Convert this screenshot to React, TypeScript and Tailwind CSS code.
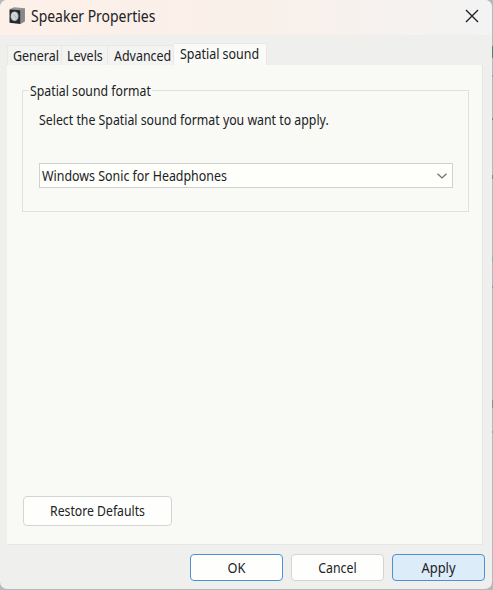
import { useState } from 'react';

const TABS = [
  { label: 'General', size: 'w-[55px] pl-[4.5px]' },
  { label: 'Levels', size: 'w-[46px] pl-[5px]' },
  { label: 'Advanced', size: 'w-[66px] pl-[5.5px]' },
  { label: 'Spatial sound', size: 'w-[93px] pl-[6px]' },
];

function SpeakerIcon() {
  return (
    <svg width="17" height="18" viewBox="0 0 17 18" className="shrink-0">
      <path d="M.5 2.2 5 .3 15.8 1.3v13L11.2 17z" fill="#929597" />
      <path d="M11.2 3.2 15.8 1.3v13.2L11.2 17z" fill="#85898b" />
      <path d="M.5 2.4 11.2 3.2V17L.5 15.7z" fill="#26292b" />
      <ellipse cx="5.6" cy="9.3" rx="4" ry="4.9" fill="#a5abae" />
      <ellipse cx="5.4" cy="9" rx="3.1" ry="3.9" fill="#d3d7d9" />
      <path d="m4.6 7.6 2.6 3.4" stroke="#a9aeb1" strokeWidth="1" />
    </svg>
  );
}

function TitleBar() {
  return (
    <header className="flex h-[35px] shrink-0 items-start bg-linear-to-r from-[#fdf0e8] via-[#f9f0ea] via-55% to-[#f3f3f3] pl-[9px]">
      <div className="pt-[7px]">
        <SpeakerIcon />
      </div>
      <h1 className="ml-[5px] flex-1 origin-left scale-x-[0.9] pt-[6px] text-[15.5px] leading-5 whitespace-nowrap">
        Speaker Properties
      </h1>
      <button aria-label="Close" className="mt-[9px] mr-[13px]">
        <svg width="14" height="14" viewBox="0 0 14 14" fill="none" stroke="#202124" strokeWidth="1.4">
          <path d="m1 1 12 12M13 1 1 13" />
        </svg>
      </button>
    </header>
  );
}

export default function App() {
  const [active, setActive] = useState('Spatial sound');

  return (
    <div className="flex h-[590px] w-[493px] overflow-hidden bg-[#b5b9ba] font-['Noto_Sans','Open_Sans',sans-serif] text-[#202124]">
      <main className="flex h-[589px] w-[492px] shrink-0 flex-col overflow-hidden rounded-[7px] bg-[#efefee]">
        <TitleBar />

        <nav className="flex h-[30px] shrink-0 items-end pl-[7px]">
          {TABS.map((tab) => (
            <button
              key={tab.label}
              onClick={() => setActive(tab.label)}
              className={`flex items-start border-t border-r text-left text-[15px] whitespace-nowrap first:border-l ${tab.size} ${
                active === tab.label
                  ? 'h-[22px] border-[#e8e9e7] bg-[#fafbf7] leading-[19px]'
                  : 'h-[20px] border-[#e8e9e6] bg-[#f3f3f1] leading-[18px]'
              }`}
            >
              <span className="origin-left scale-x-[0.83]">{tab.label}</span>
            </button>
          ))}
        </nav>

        <section className="ml-[7px] flex h-[480px] w-[476px] shrink-0 flex-col items-start border-r border-b border-[#e6e7e4] bg-[#f9faf6] pl-[15px]">
          <fieldset className="mt-[16px] h-[131px] w-[447px] border border-[#dfe1de] pl-4">
            <legend className="-ml-[10px] h-[18px] w-[123px] pl-px text-[13.5px] leading-[20px] whitespace-nowrap">
              <span className="block origin-left scale-x-[0.91]">Spatial sound format</span>
            </legend>
            <p className="mt-[11px] origin-left scale-x-[0.912] text-[13.5px] leading-5 whitespace-nowrap">
              Select the Spatial sound format you want to apply.
            </p>
            <button className="mt-[33px] flex h-[25px] w-[414px] items-center justify-between border border-[#cfd2cf] bg-[#fefffb] pr-[5px] pl-[2px]">
              <span className="origin-left scale-x-[0.919] text-[13.5px] leading-5 whitespace-nowrap">
                Windows Sonic for Headphones
              </span>
              <svg width="10" height="6" viewBox="0 0 10 6" fill="none" stroke="#6d7070" strokeWidth="1.2">
                <path d="m.5.7 4.5 4.3L9.5.7" />
              </svg>
            </button>
          </fieldset>
          <button className="mt-auto mb-[18px] ml-px h-[30px] w-[149px] rounded-[4px] border border-[#d3d5d2] bg-[#fefffc] text-[13.5px] leading-5">
            <span className="block scale-x-[0.905]">Restore Defaults</span>
          </button>
        </section>

        <footer className="flex flex-1 items-start justify-end gap-[8px] pt-[9px] pr-[7px] text-[15px] leading-[18px]">
          <button className="h-[27px] w-[93px] rounded-[4px] border border-[#4b91d8] bg-[#fefffd] pb-[2px]">
            <span className="block scale-x-[0.85]">OK</span>
          </button>
          <button className="h-[27px] w-[93px] rounded-[4px] border border-[#d3d5d3] bg-[#fefffc] pb-[2px]">
            <span className="block scale-x-[0.82]">Cancel</span>
          </button>
          <button className="h-[27px] w-[93px] rounded-[4px] border border-[#4b91d8] bg-[#dcecf8] pb-[2px]">
            <span className="block scale-x-[0.86]">Apply</span>
          </button>
        </footer>
      </main>

      {/* sliver of the window behind the dialog */}
      <div className="flex w-px flex-col">
        <i className="mt-[46px] h-[12px] bg-[#3f8878]" />
        <i className="mt-[17px] h-[2px] bg-[#78a9c4]" />
        <i className="mt-[41px] h-[2px] bg-[#5c9299]" />
        <i className="mt-[55px] h-[4px] bg-[#62968f]" />
        <i className="mt-[77px] h-[6px] bg-[#8cb9ad]" />
        <i className="mt-[24px] h-[2px] bg-[#75a4c6]" />
        <i className="mt-[112px] h-[8px] bg-[#799987]" />
        <i className="mt-[23px] h-[2px] bg-[#75a4c6]" />
      </div>
    </div>
  );
}
